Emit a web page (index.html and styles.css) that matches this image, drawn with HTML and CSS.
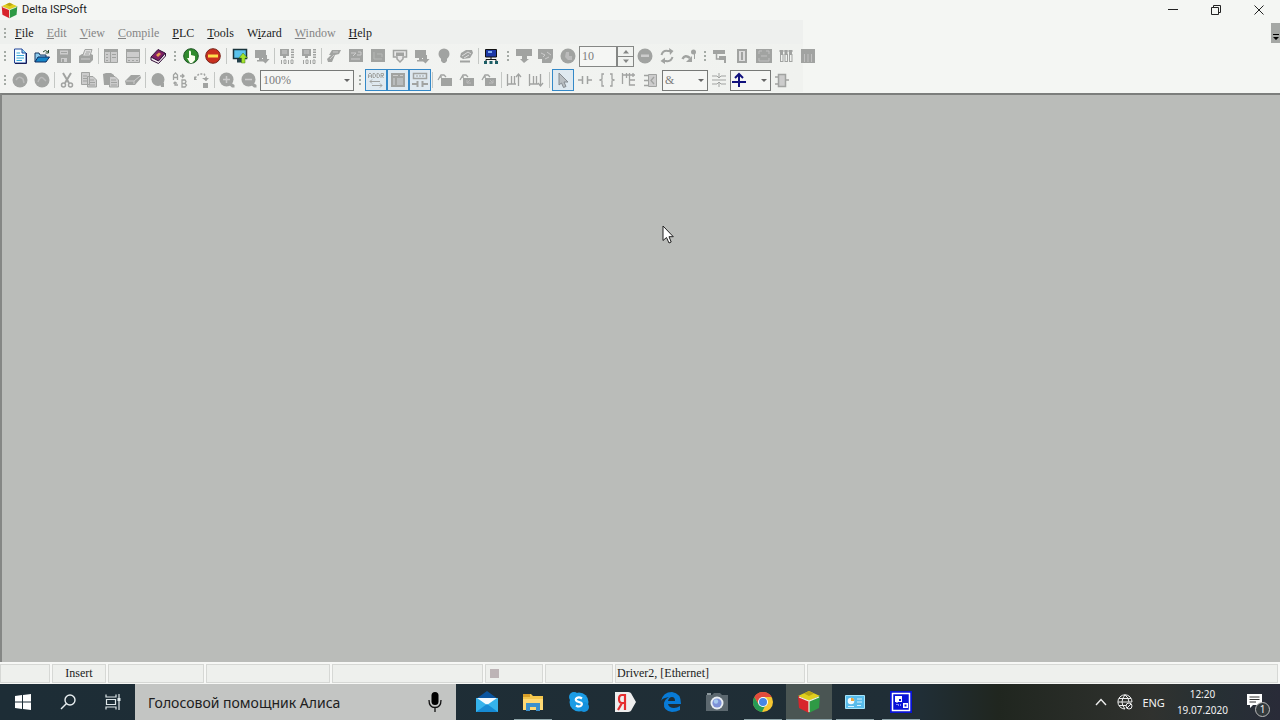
FILE: index.html
```html
<!DOCTYPE html>
<html lang="en">
<head>
<meta charset="utf-8">
<title>Delta ISPSoft</title>
<link rel="stylesheet" href="styles.css">
</head>
<body>
<svg class="sprite" aria-hidden="true">
  <symbol id="cube" viewBox="0 0 24 24"><path d="M12 1 23 6 12 11 1 6Z" fill="#e0cf1c"/><path d="M1 6 12 11V23L2 18Z" fill="#d8262c"/><path d="M23 6 12 11V23L22 18Z" fill="#2f9a45"/><path d="M2 7 12 11 22 7M12 11V22" fill="none" stroke="#eef3e4" stroke-width="1.200"/><path d="M12 1 17 3.500 12 6 7 3.500Z" fill="#b8a414"/></symbol>
  <symbol id="monitor" viewBox="0 0 16 16"><path d="M1 2H12V10H1Z"/><path d="M5 10H8V12H5ZM3 12H10V13.500H3Z"/></symbol>
  <symbol id="folder-tag" viewBox="0 0 16 16"><path d="M4 6H15V14H4Z"/><path d="M1 8 4 3H7L9 5" fill="none" stroke="currentColor" stroke-width="1.300"/><circle cx="4" cy="5" r="1"/></symbol>
</svg>
<div class="desktop">
  <header class="titlebar">
    <svg class="app-logo"><use href="#cube"/></svg>
    <h1 class="title">Delta ISPSoft</h1>
    <div class="window-buttons">
      <button class="win-btn" aria-label="Minimize"><svg viewBox="0 0 12 12"><path d="M1 5.500H11"/></svg></button>
      <button class="win-btn" aria-label="Restore"><svg viewBox="0 0 12 12"><path d="M1.500 3.500H8.500V10.500H1.500ZM3.500 3.500V1.500H10.500V8.500H8.500"/></svg></button>
      <button class="win-btn" aria-label="Close"><svg viewBox="0 0 12 12"><path d="M1.500 1.500 10.500 10.500M10.500 1.500 1.500 10.500"/></svg></button>
    </div>
  </header>

  <nav class="menubar">
    <span class="grip"></span>
    <div class="menus">
      <button class="menu"><u>F</u>ile</button>
      <button class="menu off"><u>E</u>dit</button>
      <button class="menu off"><u>V</u>iew</button>
      <button class="menu off"><u>C</u>ompile</button>
      <button class="menu"><u>P</u>LC</button>
      <button class="menu"><u>T</u>ools</button>
      <button class="menu">W<u>i</u>zard</button>
      <button class="menu off"><u>W</u>indow</button>
      <button class="menu"><u>H</u>elp</button>
    </div>
    <button class="overflow" aria-label="More"><svg viewBox="0 0 8 8"><path d="M1 1H7V2H1ZM1 4H7L4 7Z"/></svg></button>
  </nav>

  <div class="toolbar">
    <span class="grip"></span>
    <button class="tool" aria-label="New"><svg viewBox="0 0 16 16"><path d="M2.500 1H10L14 5V15H2.500Z" fill="#f5fdff" stroke="#23479b"/><path d="M10 1V5H14" fill="#8edaf2" stroke="#23479b"/><path d="M4.500 5H8M4.500 7.500H12M4.500 10H12M4.500 12.500H10" stroke="#38a7d8"/><path d="M3 15.500H14.500V5" stroke="#151a58" fill="none"/></svg></button>
    <button class="tool" aria-label="Open"><svg viewBox="0 0 16 16"><path d="M1 14V5H5L6 7H12V9" fill="#8ecdf0" stroke="#17375e"/><path d="M1 14 4 9H15.500L12 14Z" fill="#1686c8" stroke="#102c60"/><path d="M9 4Q11 1 14 4M14.500 2V5H11.500" fill="none" stroke="#27462c"/></svg></button>
    <button class="tool" aria-label="Save" disabled><svg viewBox="0 0 16 16"><path d="M1 1H15V15H1Z"/><path d="M4 2.500H12V6.500H4ZM5 10H11V14H5Z" fill="#ccc"/><path d="M5 4.500H11" stroke="currentColor"/><path d="M6 11H8V14H6Z"/></svg></button>
    <button class="tool" aria-label="Print" disabled><svg viewBox="0 0 16 16"><path d="M1 8 4 6H13L15 7V12L12 15H1Z"/><path d="M4.500 8 7 1.500H14L12 8Z" fill="#ddd" stroke="currentColor"/><path d="M8 4H12M7 6H11" stroke="currentColor"/><path d="M3 11H12" stroke="#ccc"/></svg></button>
    <span class="sep"></span>
    <button class="tool" aria-label="Project pane" disabled><svg viewBox="0 0 16 16"><path d="M1.500 1.500H14.500V14.500H1.500Z" fill="#ccc" stroke="currentColor"/><path d="M1 1H15V4H1ZM7 4H8V15H7ZM3 6H5V7H3ZM3 9H5V10H3ZM3 12H5V13H3Z"/><path d="M9 6.500H13M9 9.500H13" stroke="currentColor"/></svg></button>
    <button class="tool" aria-label="Output pane" disabled><svg viewBox="0 0 16 16"><path d="M1.500 1.500H14.500V14.500H1.500Z" fill="#ccc" stroke="currentColor"/><path d="M1 1H15V4H1ZM1 9H15V10H1ZM3 12H5V13H3ZM7 12H9V13H7ZM11 12H13V13H11Z"/></svg></button>
    <span class="sep"></span>
    <button class="tool" aria-label="Library"><svg viewBox="0 0 16 16"><path d="M1 9 8 1.500 15 5 8.500 13Z" fill="#802064" stroke="#32113a"/><path d="M1 9V12L8.500 15.500 15.500 8V5L8.500 13Z" fill="#f4e9ef" stroke="#32113a"/><path d="M6 7 9 4.500 11 6 8 9Z" fill="#e9a24d"/></svg></button>

    <span class="grip"></span>
    <button class="tool" aria-label="Run"><svg viewBox="0 0 16 16"><circle cx="8" cy="8" r="7.300" fill="#318b2d" stroke="#1d5424"/><path d="M6 3Q7.500 1.500 8 4V7L12 8V12L9 15H7L4 10 6 10Z" fill="#fbfff0"/></svg></button>
    <button class="tool" aria-label="Stop"><svg viewBox="0 0 16 16"><circle cx="8" cy="8" r="7.300" fill="#c9301f" stroke="#782319"/><path d="M3 6.500H13V9.500H3Z" fill="#ffe04c"/></svg></button>
    <span class="sep wide"></span>
    <button class="tool" aria-label="Download"><svg viewBox="0 0 16 16"><path d="M1.500 1.500H14.500V10.500H1.500Z" fill="#59c3ec" stroke="#18333b" stroke-width="1.500"/><path d="M5 11H10V14.500H5Z" fill="#23404a"/><path d="M11 5 15.500 10H13V15H9.500V10H7Z" fill="#a4e32c" stroke="#3c701d" stroke-width=".5"/></svg></button>
    <button class="tool" aria-label="Upload" disabled><svg viewBox="0 0 16 16"><use href="#monitor"/><path d="M9 7H13V11H15.500L11.500 15.500 7 11H9Z"/></svg></button>
    <span class="sep"></span>
    <button class="tool" aria-label="Online" disabled><svg viewBox="0 0 16 16"><path d="M1 1H10V8H1ZM4 8H7V10H4Z"/><path d="M3 3H8M3 5H8" stroke="#ccc"/><path d="M13.500 1V10" stroke="currentColor" stroke-width="3" stroke-dasharray="1.500 1"/><path d="M2.500 12V16M5 12H7V15.500H5ZM9.500 12V16M12 12H14V15.500H12Z" fill="none" stroke="currentColor"/></svg></button>
    <button class="tool" aria-label="Offline" disabled><svg viewBox="0 0 16 16"><path d="M1 1H10V8H1ZM4 8H7V10H4Z"/><path d="M3 3H8M3 5H8" stroke="#ccc"/><path d="M13.500 1V10" stroke="currentColor" stroke-width="3" stroke-dasharray="1.500 1"/><path d="M2.500 12V16M5 12H7V15.500H5ZM9.500 12V16M12 12H14V15.500H12Z" fill="none" stroke="currentColor"/></svg></button>
    <span class="sep"></span>
    <button class="tool" aria-label="Compile" disabled><svg viewBox="0 0 16 16"><path d="M6 2H15L13 6 9 7 6 14 2 14 1 11 5 7H3Z"/><path d="M7 4H12M4 11 8 7" stroke="#ccc"/></svg></button>
    <button class="tool" aria-label="Check" disabled><svg viewBox="0 0 16 16"><path d="M1 1H15V14H1Z"/><path d="M3 5H8L5 8M10 4H13V7H9M3 11H12" fill="none" stroke="#ccc"/></svg></button>
    <button class="tool" aria-label="Table" disabled><svg viewBox="0 0 16 16"><path d="M1 1H15V14H1Z"/><path d="M4 4V11H12M7 6H12V9" fill="none" stroke="#b6b8b6"/></svg></button>
    <button class="tool" aria-label="Comment" disabled><svg viewBox="0 0 16 16"><path d="M1.500 2.500H14.500V9H11V11L8 14 5 11V9H1.500Z" fill="#e8e8e8" stroke="currentColor" stroke-width="1.500"/><path d="M4 4.500H12V8H4Z"/></svg></button>
    <button class="tool" aria-label="Device monitor" disabled><svg viewBox="0 0 16 16"><use href="#monitor"/><path d="M9 7H13V11H15.500L11.500 15.500 7 11H9Z"/></svg></button>
    <button class="tool" aria-label="Hint" disabled><svg viewBox="0 0 16 16"><circle cx="8" cy="6" r="5.500"/><path d="M5 9H11V13L9 15H7L5 13Z"/></svg></button>
    <button class="tool" aria-label="Edit device" disabled><svg viewBox="0 0 16 16"><path d="M3 5 8 2H14L15 5 12 10 5 11 2 9Z"/><path d="M4 8 10 4 13 6M6 10 11 7" fill="none" stroke="#ddd"/><path d="M2 13.500H12" stroke="currentColor" stroke-width="2"/></svg></button>
    <span class="sep"></span>
    <button class="tool" aria-label="Communication settings"><svg viewBox="0 0 16 16"><path d="M2.500 1.500H13.500V9H2.500Z" fill="#1c38a6" stroke="#111"/><path d="M5 3H9V5H5Z" fill="#80aef2"/><path d="M8 9V12M3 14V11.500H13V14" fill="none" stroke="#111"/><path d="M1 13H4V16H1ZM6.500 13H9.500V16H6.500ZM12 13H15V16H12Z" fill="#1b5d64"/></svg></button>

    <span class="grip"></span>
    <button class="tool" aria-label="Simulate" disabled><svg viewBox="0 0 16 16"><path d="M0 1H16V8H11V11H13L8 15 4 11H6V8H0Z"/></svg></button>
    <button class="tool" aria-label="Breakpoints" disabled><svg viewBox="0 0 16 16"><path d="M0 1H15V10L13 15H4V11H0Z"/><path d="M3 5 7 7 5 9M9 4 13 7M7 11 11 9" stroke="#ccc" fill="none"/></svg></button>
    <button class="tool" aria-label="Step" disabled><svg viewBox="0 0 16 16"><circle cx="8" cy="8" r="7.500"/><path d="M6 4H9V8H12V12H8L5 9Z" fill="#bbb"/></svg></button>
    <input class="count" type="text" value="10" aria-label="Scan count" disabled>
    <span class="spin">
      <button aria-label="Increase" disabled><svg viewBox="0 0 8 5"><path d="M1 4.500H7L4 1Z"/></svg></button>
      <button aria-label="Decrease" disabled><svg viewBox="0 0 8 5"><path d="M1 .5H7L4 4Z"/></svg></button>
    </span>
    <button class="tool" aria-label="Break" disabled><svg viewBox="0 0 16 16"><circle cx="8" cy="8" r="7.500"/><path d="M4 6.500H12V9H4Z" fill="#ccc"/></svg></button>
    <button class="tool" aria-label="Continuous" disabled><svg viewBox="0 0 16 16"><path d="M2.500 7Q4 2 9 3H12M13.500 9Q12 14 7 13H4" fill="none" stroke="currentColor" stroke-width="2"/><path d="M10 0 14.500 3 11 7ZM6 9.500 1.500 13 6 16Z"/></svg></button>
    <button class="tool" aria-label="Step over" disabled><svg viewBox="0 0 16 16"><path d="M1.500 11Q4 6 9 10" fill="none" stroke="currentColor" stroke-width="2.500"/><path d="M5 14H11V8Z"/><circle cx="12.500" cy="4" r="2.500"/><path d="M13.500 4V11" stroke="currentColor"/></svg></button>

    <span class="grip short"></span>
    <button class="tool" aria-label="Network" disabled><svg viewBox="0 0 16 16"><path d="M1 2H13V6H1Z"/><path d="M4.500 6V11H8" fill="none" stroke="currentColor" stroke-width="1.500"/><path d="M7 8H14V15H12V12H7Z"/></svg></button>
    <button class="tool" aria-label="Module" disabled><svg viewBox="0 0 16 16"><path d="M3 1H13V15H3Z"/><path d="M5 3H11V13H5Z" fill="#ddd"/><path d="M7 4H9V12H7Z"/></svg></button>
    <button class="tool" aria-label="Memory" disabled><svg viewBox="0 0 16 16"><path d="M0 1H16V15H0Z"/><path d="M3 6V3H6M10 3H13V6M3 10V13H13V10M5 8H11" fill="none" stroke="#c0c0c0"/></svg></button>
    <button class="tool" aria-label="Registers" disabled><svg viewBox="0 0 16 16"><path d="M1 3H15M2.500 6V14M5 6V14M7 6V14M9.500 6V14M11.500 6V14M14 6V14M2.500 13.500H5M7 13.500H9.500M11.500 13.500H14" fill="none" stroke="currentColor"/><path d="M2 2H5V7H2ZM6.500 2H9.500V7H6.500ZM11 2H14V7H11Z"/></svg></button>
    <button class="tool" aria-label="Bits" disabled><svg viewBox="0 0 16 16"><path d="M1 1H15V15H1Z"/><path d="M4.500 6V14M8 6V14M11.500 6V14" stroke="#c0c0c0"/></svg></button>
  </div>

  <div class="toolbar">
    <span class="grip"></span>
    <button class="tool" aria-label="Undo" disabled><svg viewBox="0 0 16 16"><circle cx="8" cy="8" r="7.500"/><path d="M4 8Q7 3 11 7L12 11" fill="none" stroke="#bbb" stroke-width="1.500"/></svg></button>
    <button class="tool" aria-label="Redo" disabled><svg viewBox="0 0 16 16"><circle cx="8" cy="8" r="7.500"/><path d="M4 10Q6 4 9 6L12 9" fill="none" stroke="#bbb" stroke-width="1.500"/></svg></button>
    <span class="sep"></span>
    <button class="tool" aria-label="Cut" disabled><svg viewBox="0 0 16 16"><path d="M4 1 10 11M12 1 6 11" stroke="currentColor" stroke-width="2"/><circle cx="4.500" cy="13" r="2" fill="none" stroke="currentColor" stroke-width="1.500"/><circle cx="11.500" cy="13" r="2" fill="none" stroke="currentColor" stroke-width="1.500"/></svg></button>
    <button class="tool" aria-label="Copy" disabled><svg viewBox="0 0 16 16"><path d="M.5 .5H8.500V12.500H.5ZM6.500 4.500H12L15.500 8V15H6.500Z" fill="#ccc" stroke="currentColor"/><path d="M2 4H6M2 6.500H6M2 9H6M8 8H13M8 10.500H14M8 13H14" stroke="currentColor"/></svg></button>
    <button class="tool" aria-label="Paste" disabled><svg viewBox="0 0 16 16"><path d="M0 2 3 1H8L11 3V13H1Z"/><path d="M6.500 4.500H12L15.500 8V15H6.500Z" fill="#ccc" stroke="currentColor"/><path d="M8 8H13M8 10.500H14M8 13H14" stroke="currentColor"/></svg></button>
    <button class="tool" aria-label="Delete" disabled><svg viewBox="0 0 16 16"><path d="M6 3H15L16 6 10 13H1L0 9Z"/><path d="M1 9H9L15 4M9 9V12" fill="none" stroke="#ccc"/></svg></button>
    <span class="sep"></span>
    <button class="tool" aria-label="Find" disabled><svg viewBox="0 0 16 16"><circle cx="8" cy="7.500" r="6.500"/><path d="M10 10 14 11V15H11Z"/></svg></button>
    <button class="tool" aria-label="Replace" disabled><svg viewBox="0 0 16 16"><path d="M1.500 8V3L3.500 1 5.500 3V8M1.500 5.500H5.500M10 8H13L14 9.500 13 11.500H10ZM10 11.500H13L14.500 13 13 15H10ZM8 4H12M10 2 12 4 10 6M3 10V13H6M1.500 11.500 3 10 5 11.500" fill="none" stroke="currentColor" stroke-width="1.300"/></svg></button>
    <button class="tool" aria-label="Go to" disabled><svg viewBox="0 0 16 16"><path d="M1 6 5 2 10 2 12 5V9" fill="none" stroke="currentColor" stroke-width="1.500" stroke-dasharray="2 1.500"/><path d="M8 6H15L12 9ZM9 11H14V16H9ZM0 4V8H3Z"/></svg></button>
    <span class="sep"></span>
    <button class="tool" aria-label="Zoom in" disabled><svg viewBox="0 0 16 16"><circle cx="7.500" cy="7.500" r="7"/><path d="M11 10 15.500 13V15.500L13 15.500 9 12Z"/><path d="M4 7.500H11M7.500 4V11" stroke="#ccc" stroke-width="1.500"/></svg></button>
    <button class="tool" aria-label="Zoom out" disabled><svg viewBox="0 0 16 16"><circle cx="7.500" cy="7.500" r="7"/><path d="M11 10 15.500 13V15.500L13 15.500 9 12Z"/><path d="M4 7.500H11" stroke="#ccc" stroke-width="1.500"/></svg></button>
    <span class="combo zoom"><select aria-label="Zoom" disabled><option>100%</option></select></span>

    <span class="grip"></span>
    <button class="tool on" aria-label="Show address" disabled><svg viewBox="0 0 16 16"><path d="M.5 6V2.500L2 1 3.500 2.500V6M.5 4H3.500M5 1.500H6.500L7.500 3V4.500L6.500 5.500H5ZM9 1.500H10.500L11.500 3V4.500L10.500 5.500H9ZM13 6V1.500H15.500V3.500H13M14 4 15.500 6M2 9.500H12M4 7.500 2 9.500 4 11.500M4 13.500H14M12 11.500 14 13.500 12 15.500" fill="none" stroke="currentColor"/></svg></button>
    <button class="tool on" aria-label="Show comments" disabled><svg viewBox="0 0 16 16"><path d="M1 1H15V15H1Z"/><path d="M3 6H5V13H3ZM7 6H13V13H7Z" fill="#b9bcbd"/><path d="M3 3.500H8M10 3.500H13" stroke="#ccc"/></svg></button>
    <button class="tool on" aria-label="Show symbols" disabled><svg viewBox="0 0 16 16"><path d="M1.500 1.500H14.500V6.500H1.500Z" fill="none" stroke="currentColor" stroke-width="1.500"/><path d="M4 4H12" stroke="currentColor" stroke-dasharray="2 1"/><path d="M0 12H5M11 12H16M5.500 9V15M10.500 9V15" fill="none" stroke="currentColor" stroke-width="2"/></svg></button>
    <span class="sep"></span>
    <button class="tool" aria-label="Bookmark" disabled><svg><use href="#folder-tag"/></svg></button>
    <button class="tool" aria-label="Previous bookmark" disabled><svg viewBox="0 0 16 16"><use href="#folder-tag"/><path d="M8 8V11H12M8 11 11 8" fill="none" stroke="#bbb"/></svg></button>
    <button class="tool" aria-label="Next bookmark" disabled><svg viewBox="0 0 16 16"><use href="#folder-tag"/><path d="M12 8V11H8M12 11 9 8" fill="none" stroke="#bbb"/></svg></button>
    <span class="sep"></span>
    <button class="tool" aria-label="Network above" disabled><svg viewBox="0 0 16 16"><path d="M1.500 2V14M5.500 4V12M8.500 4V12M1 12H10M12.500 14V3M10 5 12.500 2 15 5" fill="none" stroke="currentColor" stroke-width="1.300"/></svg></button>
    <button class="tool" aria-label="Network below" disabled><svg viewBox="0 0 16 16"><path d="M1.500 2V14M5.500 4V12M8.500 4V12M1 12H10M12.500 2V13M10 11 12.500 14 15 11" fill="none" stroke="currentColor" stroke-width="1.300"/></svg></button>
    <span class="sep wide"></span>
    <button class="tool on" aria-label="Select" disabled><svg viewBox="0 0 16 16"><path d="M4 1 13 10H9L11 14.500 8.500 15.500 6.500 11 4 13Z" fill="#b9bec2" stroke="#858b90"/></svg></button>
    <button class="tool" aria-label="Contact" disabled><svg viewBox="0 0 16 16"><path d="M1 8H5M11 8H15M5.500 4V12M10.500 4V12" stroke="currentColor" stroke-width="1.500"/></svg></button>
    <button class="tool" aria-label="Coil" disabled><svg viewBox="0 0 16 16"><path d="M5 2H3V7L1 8 3 9V14H5M11 2H13V7L15 8 13 9V14H11" fill="none" stroke="currentColor" stroke-width="1.300"/></svg></button>
    <button class="tool" aria-label="Compare contact" disabled><svg viewBox="0 0 16 16"><path d="M1.500 1V12M1 3H14M5.500 1V6M8.500 1V6M8.500 5V13H14M9 8H14M12 1V5" fill="none" stroke="currentColor" stroke-width="1.300"/></svg></button>
    <button class="tool" aria-label="Function block" disabled><svg viewBox="0 0 16 16"><path d="M5.500 2.500H13.500V14.500H5.500Z" fill="#ccc" stroke="currentColor"/><path d="M1 3.500H5M1 8.500H5M1 13.500H5M11 5 8 8.500 11 12" fill="none" stroke="currentColor" stroke-width="1.300"/></svg></button>
    <span class="combo logic"><select aria-label="Logic" disabled><option>&amp;</option></select></span>
    <button class="tool" aria-label="Insert row" disabled><svg viewBox="0 0 16 16"><path d="M1 4H6M10 4H15M1 8H15M1 12H6M10 12H15M8 1V6M8 10V15M6 4 8 6 10 4M6 12 8 10 10 12" fill="none" stroke="currentColor"/></svg></button>
    <span class="combo branch"><select aria-label="Branch"><option label=" "></option></select><svg class="branch-icon" viewBox="0 0 16 16"><path d="M1 10H15M8 2V15M4 6 8 2 12 6" fill="none" stroke="#11117d" stroke-width="2"/></svg></span>
    <button class="tool" aria-label="Block" disabled><svg viewBox="0 0 16 16"><path d="M4.500 2.500H11.500V14.500H4.500Z" fill="#ccc" stroke="currentColor" stroke-width="1.500"/><path d="M1 5H4M1 12H4M12 8H15" stroke="currentColor" stroke-width="1.500"/></svg></button>
  </div>

  <main class="workspace"></main>

  <footer class="status">
    <span class="cell c1"></span><span class="cell c2">Insert</span><span class="cell c3"></span><span class="cell c4"></span><span class="cell c5"></span><span class="cell c6"><i class="lamp"></i></span><span class="cell c7"></span><span class="cell c8">Driver2, [Ethernet]</span><span class="cell rest"></span>
  </footer>

  <div class="taskbar">
    <button class="task" aria-label="Start"><svg class="i16" viewBox="0 0 16 16"><path d="M0 2 7 1V7.500H0ZM8 1 16 0V7.500H8ZM0 8.500H7V15L0 14ZM8 8.500H16V16L8 15Z" fill="#fff"/></svg></button>
    <button class="task" aria-label="Search"><svg class="i16" viewBox="0 0 16 16"><circle cx="10" cy="6" r="5" fill="none" stroke="#e8eef0" stroke-width="1.400"/><path d="M6.500 9.500 1 15" stroke="#e8eef0" stroke-width="1.400"/></svg></button>
    <button class="task" aria-label="Task view"><svg class="i16" viewBox="0 0 16 16"><path d="M1 .5V3H11V.5M1 15.500V13H11V15.500M1.500 5.500H10.500V10.500H1.500ZM14 0V16" fill="none" stroke="#dfe8ea" stroke-width="1.200"/><path d="M12.500 4H15.500V7H12.500Z" fill="#dfe8ea"/></svg></button>
    <button class="alice"><span>Голосовой помощник Алиса</span><svg viewBox="0 0 16 20"><rect x="4.500" y="0" width="7" height="13" rx="3.500"/><path d="M2 8Q2 15.500 8 15.500T14 8M8 15V20" fill="none" stroke="#111" stroke-width="1.300"/></svg></button>
    <div class="apps">
      <button class="task" aria-label="Mail"><svg class="i24" viewBox="0 0 24 24"><path d="M1 9 12 1 23 9Z" fill="#0b559f"/><path d="M1 8H23V22H1Z" fill="#35b3ec"/><path d="M2 8H22L12 15Z" fill="#f3fafe"/><path d="M1 22 12 14 23 22Z" fill="#168bd5"/></svg></button>
      <button class="task run" aria-label="File Explorer"><svg class="i24" viewBox="0 0 24 24"><path d="M2 4H10L12 6H22V20H2Z" fill="#f4c64c"/><path d="M2 4H9V7H2Z" fill="#d89e28"/><path d="M2 9H22V20H2Z" fill="#ffd974"/><path d="M5 21V13H19V21H15V17H9V21Z" fill="#3c91cd"/></svg></button>
      <button class="task" aria-label="Skype"><svg class="i24" viewBox="0 0 24 24"><circle cx="12" cy="12" r="9.500" fill="#1b9ce5"/><circle cx="7" cy="7" r="5" fill="#1b9ce5"/><circle cx="17" cy="17" r="5" fill="#1591dd"/><path d="M15 8.500Q12 6.500 9.800 8T10 11.300L14 12.700Q15.800 14 14 15.700T9 15.500" fill="none" stroke="#fff" stroke-width="2.200"/></svg></button>
      <button class="task" aria-label="Yandex"><svg class="i24" viewBox="0 0 24 24"><path d="M2 2H15Q18 2 19 5L23 12 19 19Q18 22 15 22H2Z" fill="#eee"/><path d="M12 20V5H9Q6 5 6 9T9 13H12M9 13 5 20" fill="none" stroke="#e52d2f" stroke-width="2.200"/></svg></button>
      <button class="task" aria-label="Edge"><svg class="i24" viewBox="0 0 24 24"><path d="M2 11Q4 2 13 2 22 3 22 14H9Q10 18 15 18 18 18 21 16V20Q17 22 13 22 4 21 5 13 6 9 10 7 3 8 2 11ZM9 11H16Q16 7 13 7 10 7 9 11Z" fill="#087bd7" fill-rule="evenodd"/></svg></button>
      <button class="task" aria-label="Camera"><svg class="i24" viewBox="0 0 24 24"><path d="M1 5H7L9 3H15L17 5H23V21H1Z" fill="#5c686f"/><path d="M2 3H6V5H2Z" fill="#8d999e"/><circle cx="12" cy="13" r="6.500" fill="#e9eef2"/><circle cx="12" cy="13" r="4.600" fill="#7e91d7"/><circle cx="11" cy="11.500" r="2.200" fill="#a6c9ef"/></svg></button>
      <button class="task run" aria-label="Chrome"><svg class="i24" viewBox="0 0 24 24"><circle cx="12" cy="12" r="10" fill="#f5c631"/><path d="M3.300 7A10 10 0 0 1 20.700 7H12V12L8 15Z" fill="#e24b3c"/><path d="M3.300 7 8 15 14 16 11 22A10 10 0 0 1 3.300 7Z" fill="#269b55"/><circle cx="12" cy="12" r="5" fill="#fff"/><circle cx="12" cy="12" r="4" fill="#4786e4"/></svg></button>
      <button class="task run active" aria-label="Delta ISPSoft"><svg class="i24"><use href="#cube"/></svg></button>
      <button class="task run" aria-label="Control Panel"><svg class="i24" viewBox="0 0 24 24"><path d="M2.500 5.500H21.500V18.500H2.500Z" fill="#58bceb" stroke="#a5e4fa"/><circle cx="8" cy="11" r="3.300" fill="#eefaff"/><path d="M8 11V7.700A3.300 3.300 0 0 1 11.300 11Z" fill="#eba43a"/><path d="M14 9H19M14 12H19M5 16.500H11M14 15.500H18" stroke="#d5f2ff"/></svg></button>
      <button class="task run" aria-label="COMMGR"><svg class="i24" viewBox="0 0 24 24"><path d="M1 1H23V23H1Z" fill="#0813d7"/><path d="M3.500 3.500H20.500V20.500H3.500Z" fill="none" stroke="#fff" stroke-width="1.500"/><path d="M6 6H13V12H6ZM14 13H19V18H14Z" fill="#fff"/><path d="M10 9H12V11H10ZM15.500 14.500H17.500V16.500H15.500Z" fill="#0813d7"/><path d="M8 12V15H13" fill="none" stroke="#fff" stroke-dasharray="1 1"/></svg></button>
    </div>
    <div class="tray">
      <button class="tray-btn" aria-label="Hidden icons"><svg viewBox="0 0 16 16"><path d="M3 11 8 5.500 13 11" fill="none" stroke="#eee" stroke-width="1.400"/></svg></button>
      <button class="tray-btn" aria-label="Network"><svg viewBox="0 0 16 16"><path d="M8 .8A7 7 0 1 0 8 15M8 .8A7 7 0 0 1 15 8M8 .8Q2 8 8 15M8 .8Q12 4 12 8M1 8H15M2 4.500H14M2 11.500H9" fill="none" stroke="#eee"/><circle cx="12" cy="12" r="3" fill="#2c2e30" stroke="#eee"/><path d="M10 14 14 10" stroke="#eee"/></svg></button>
      <span class="lang">ENG</span>
      <time class="clock"><span>12:20</span><span>19.07.2020</span></time>
      <button class="notify" aria-label="Notifications"><svg viewBox="0 0 20 20"><path d="M1 2H16V13H7L4 16V13H1Z" fill="#fff"/><path d="M3.500 5H13.500M3.500 7.500H13.500M3.500 10H10" stroke="#333"/></svg><span class="badge">1</span></button>
    </div>
  </div>
  <svg class="pointer" viewBox="0 0 12 19"><path d="M1 1V15.500L4.500 12.500 7 18 9.200 17 7 11.700H11.300Z" fill="#fff" stroke="#222"/></svg>
</div>
</body>
</html>
```
FILE: styles.css
```css
* { box-sizing: border-box; }
body { margin: 0; font-family: "Liberation Serif", "Times New Roman", serif; font-size: 12px; color: #1c1c1c; }
button { margin: 0; padding: 0; border: 0; background: none; font: inherit; color: inherit; }
.sprite { position: absolute; width: 0; height: 0; }
.desktop { position: relative; display: flex; flex-direction: column; min-height: 100vh; background: #f4f6f3; overflow: hidden; }

.titlebar { display: flex; align-items: center; height: 20px; padding-left: 1px; }
.app-logo { width: 17px; height: 17px; margin-right: 4px; }
.title { margin: 0; font: 400 11px/20px Roboto, "Open Sans", sans-serif; }
.window-buttons { display: flex; margin-left: auto; }
.win-btn { width: 43px; height: 18px; display: flex; align-items: center; justify-content: center; }
.win-btn svg { width: 12px; height: 12px; fill: none; stroke: #222; }

.menubar { display: flex; align-items: center; height: 24px; padding-top: 2px; background: linear-gradient(90deg, #eef0ee 803px, transparent 803px); }
.menus { display: flex; gap: 13px; padding-left: 6px; }
.menu { line-height: 18px; }
.off { color: #858585; }
.overflow { display: flex; align-items: flex-end; justify-content: flex-end; width: 9px; height: 20px; margin-left: auto; background: #a5a8a5; padding-bottom: 2px; }
.overflow svg { width: 8px; height: 8px; }

.grip { flex: none; width: 11px; height: 14px; background: radial-gradient(circle, #a4aaa5 1px, transparent 1px) center / 4px 4px repeat-y; }
.menubar .grip, .toolbar > .grip:first-child, .grip.short { width: 9px; }
.toolbar { display: flex; align-items: center; height: 24px; background: linear-gradient(90deg, #f3f4f2, #f0f2ef 803px, transparent 803px); }
.tool { flex: none; width: 22px; height: 22px; display: flex; align-items: center; justify-content: center; color: #a1a3a1; }
.tool svg { flex: none; width: 16px; height: 16px; fill: currentColor; }
.tool.on { border: 1px solid #3489c8; background: #dfe9f0; }
.sep { flex: none; width: 3px; height: 16px; background: linear-gradient(#c4c7c4, #c4c7c4) center / 1px 100% no-repeat; }
.sep.wide { width: 5px; }
.count { width: 38px; height: 21px; padding: 0 2px; border: 1px solid #858785; background: #f5f6f4; color: #7c7c7c; font: 12px "Liberation Serif", serif; }
.spin { display: flex; flex-direction: column; width: 17px; height: 21px; border: 1px solid #858785; }
.spin button { flex: 1; display: flex; align-items: center; justify-content: center; }
.spin button + button { border-top: 1px solid #858785; }
.spin svg { width: 8px; height: 5px; fill: #858785; }
.combo { position: relative; height: 21px; flex: none; }
.combo select { appearance: none; width: 100%; height: 100%; margin: 0; padding: 0 2px; border: 1px solid #777977; border-radius: 0; background: #f5f6f4; color: #7c7c7c; font: 12px "Liberation Serif", serif; opacity: 1; }
.combo::after { content: ""; position: absolute; right: 4px; top: 9px; border: 3px solid transparent; border-top-color: #666; border-bottom: 0; }
.zoom { width: 94px; }
.logic { width: 46px; }
.branch { width: 41px; }
.branch-icon { position: absolute; left: 1px; top: 2px; width: 16px; height: 16px; }

.workspace { flex: 1; margin-top: 1px; border-top: 2px solid #7c7e7c; border-left: 2px solid #858785; background: #babcb9; }
.status { display: flex; gap: 2px; height: 22px; padding: 2px 2px 1px 0; background: #f7f8f6; }
.cell { flex: none; display: flex; align-items: center; border: 1px solid #d6d8d5; background: #eef0ed; padding-left: 1px; white-space: nowrap; }
.c1 { width: 50px; }
.c2 { width: 54px; padding: 0; justify-content: center; }
.c3 { width: 96px; }
.c4 { width: 124px; }
.c5 { width: 151px; }
.c6 { width: 58px; padding-left: 4px; }
.c7 { width: 68px; }
.c8 { width: 190px; }
.rest { flex: 1; }
.lamp { width: 9px; height: 9px; background: #bdb4b6; }

.taskbar { display: flex; height: 36px; background: linear-gradient(90deg, #1d2d36, #202e36 72%, #20261f 78%, #30322f 90%, #263034 95%, #292b38); color: #f2f2f2; font-family: "Noto Sans", sans-serif; }
.task { position: relative; width: 45px; display: flex; align-items: center; justify-content: center; }
.i16 { width: 16px; height: 16px; }
.i24 { width: 24px; height: 24px; }
.alice { display: flex; align-items: center; justify-content: space-between; width: 321px; padding: 0 13px; background: #c3c5c3; color: #202020; font-size: 14px; }
.alice svg { width: 16px; height: 20px; }
.apps { display: flex; margin-left: 8px; }
.apps .task { width: 46px; }
.active { background: #4a5553; }
.run::after { content: ""; position: absolute; left: 4px; right: 4px; bottom: 0; height: 1px; background: #8fa5aa; }
.active::after { left: 0; right: 0; }
.tray { display: flex; align-items: center; margin-left: auto; padding-right: 14px; font-size: 11px; }
.tray-btn { width: 24px; height: 36px; display: flex; align-items: center; justify-content: center; }
.tray-btn svg { width: 16px; height: 16px; }
.lang { margin-left: 5px; }
.clock { display: flex; flex-direction: column; align-items: center; margin-left: 12px; font-size: 10px; line-height: 16px; }
.notify { position: relative; display: flex; margin-left: 18px; }
.notify svg { width: 20px; height: 20px; }
.badge { position: absolute; right: -4px; bottom: -5px; width: 15px; height: 15px; border: 1px solid #bbb; border-radius: 50%; background: #333a3d; font-size: 10px; line-height: 13px; }
.pointer { position: absolute; left: 662px; top: 225px; width: 12px; height: 19px; }
```
